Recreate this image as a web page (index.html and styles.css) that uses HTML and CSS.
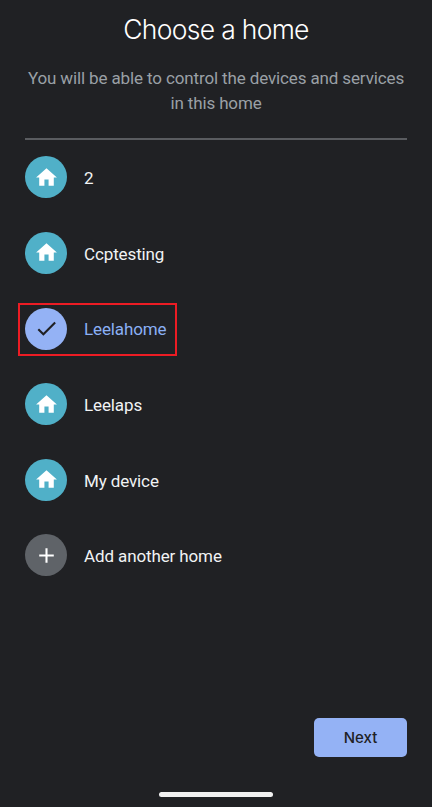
FILE: index.html
```html
<!DOCTYPE html>
<html lang="en">
<head>
<meta charset="utf-8">
<meta name="viewport" content="width=device-width, initial-scale=1">
<title>Choose a home</title>
<link rel="stylesheet" href="styles.css">
</head>
<body>
<svg class="sprite" aria-hidden="true">
  <symbol id="home" viewBox="0 0 24 24"><path d="M10 20v-6h4v6h5v-8h3L12 3 2 12h3v8z"/></symbol>
  <symbol id="check" viewBox="0 0 24 24"><path d="M9 16.17 4.83 12l-1.42 1.41L9 19 21 7l-1.41-1.41z"/></symbol>
  <symbol id="plus" viewBox="0 0 24 24"><path d="M19 13h-6v6h-2v-6H5v-2h6V5h2v6h6z"/></symbol>
</svg>
<main class="screen">
  <header class="header">
    <h1 class="title">Choose a home</h1>
    <p class="subtitle">You will be able to control the devices and services<br>in this home</p>
  </header>
  <ul class="homes">
    <li class="home"><span class="avatar"><svg class="icon"><use href="#home"/></svg></span><span class="name">2</span></li>
    <li class="home"><span class="avatar"><svg class="icon"><use href="#home"/></svg></span><span class="name">Ccptesting</span></li>
    <li class="home selected"><span class="avatar"><svg class="icon"><use href="#check"/></svg></span><span class="name">Leelahome</span></li>
    <li class="home"><span class="avatar"><svg class="icon"><use href="#home"/></svg></span><span class="name">Leelaps</span></li>
    <li class="home"><span class="avatar"><svg class="icon"><use href="#home"/></svg></span><span class="name">My device</span></li>
    <li class="home add"><span class="avatar"><svg class="icon"><use href="#plus"/></svg></span><span class="name">Add another home</span></li>
  </ul>
  <footer class="footer">
    <button class="next" type="button">Next</button>
  </footer>
  <div class="handle"></div>
</main>
</body>
</html>
```
FILE: styles.css
```css
*, *::before { box-sizing: border-box; }
body {
  margin: 0;
  background: #202124;
  color: #f1f3f4;
  font-family: Roboto, "Liberation Sans", sans-serif;
}
.sprite { display: none; }
.screen {
  display: flex;
  flex-direction: column;
  height: 807px;
  padding: 0 25px 10px;
}
.header {
  height: 140px;
  padding-top: 11px;
  border-bottom: 2px solid #5a5c60;
  text-align: center;
}
.title {
  margin: 0;
  font: 350 26.5px/36px Inter, sans-serif;
  letter-spacing: -0.7px;
  color: #fff;
}
.subtitle {
  margin: 19px -10px 0;
  font-size: 17px;
  line-height: 25px;
  letter-spacing: -0.13px;
  color: #9aa0a6;
}
.homes {
  display: flex;
  flex-direction: column;
  gap: 33.6px;
  margin: 16.4px 0 0;
  padding: 0;
  list-style: none;
}
.home {
  position: relative;
  display: flex;
  align-items: center;
  gap: 17px;
  height: 42px;
}
.avatar {
  display: flex;
  align-items: center;
  justify-content: center;
  width: 42px;
  height: 42px;
  border-radius: 50%;
  background: #50b0c8;
  color: #fff;
}
.icon {
  width: 25px;
  height: 25px;
  fill: currentColor;
}
.name {
  padding-top: 2px;
  font-size: 17px;
  line-height: 24px;
  letter-spacing: -0.12px;
}
.selected { color: #8ab0f5; }
.selected .name { padding-top: 1px; }
.selected .avatar { background: #94b2f5; color: #202124; }
.selected::before {
  content: "";
  position: absolute;
  left: -7px;
  top: -5px;
  width: 159px;
  height: 53px;
  border: 2px solid #ec1c24;
}
.add .avatar { background: #5f6368; }
.footer {
  display: flex;
  justify-content: flex-end;
  margin-top: auto;
}
.next {
  width: 93px;
  height: 39px;
  padding: 0;
  border: 0;
  border-radius: 5px;
  background: #94b2f5;
  color: #202124;
  font: 500 15px/39px Inter, sans-serif;
  letter-spacing: 0;
}
.handle {
  align-self: center;
  width: 114px;
  height: 5px;
  margin-top: 35px;
  border-radius: 3px;
  background: #f1f1f1;
}
```
